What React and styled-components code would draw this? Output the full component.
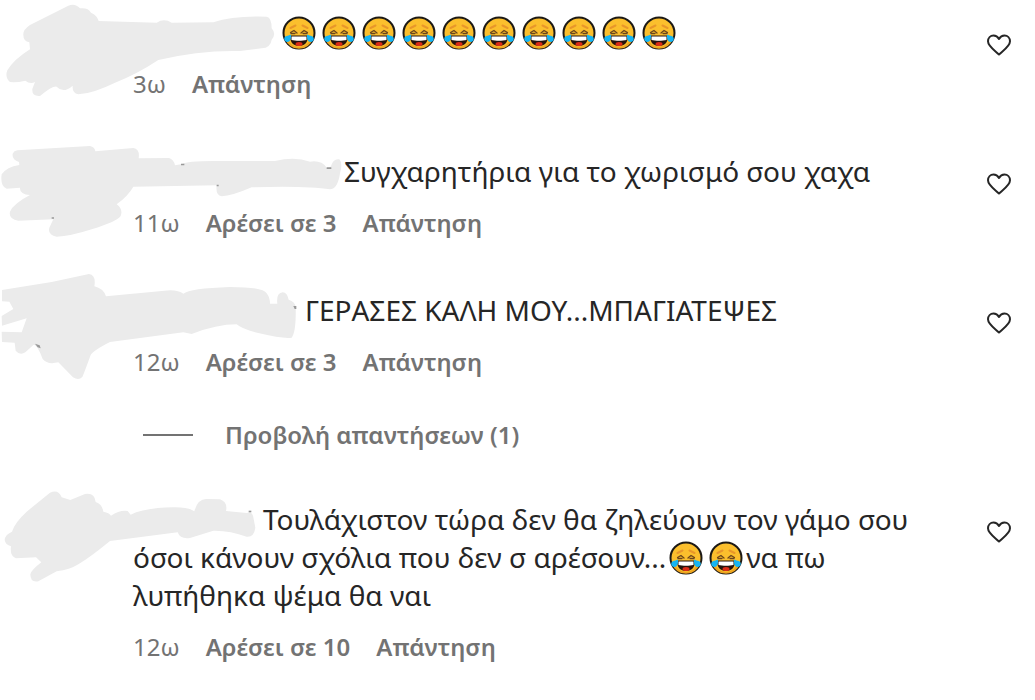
import React from 'react';
import styled, { createGlobalStyle } from 'styled-components';

const GlobalStyle = createGlobalStyle`
  body {
    margin: 0;
    background: #fff;
    font-family: 'Noto Sans', 'Open Sans', sans-serif;
  }
`;

const CommentList = styled.main`
  display: flex;
  flex-direction: column;
  gap: 49px;
  padding: 13px 23px 20px 0;
`;

const StyledComment = styled.article`
  position: relative;
  display: flex;
  align-items: flex-start;
  gap: 36px;
  padding-left: 133px;
`;

const Body = styled.div`
  flex: 1;
  min-width: 0;
`;

const Text = styled.p`
  margin: 0;
  font-size: 28px;
  line-height: 38px;
  color: #262626;
`;

const HiddenName = styled.span`
  display: inline-block;
  width: ${({ $width }) => $width}px;
`;

const Scribble = styled.svg`
  position: absolute;
  top: -29px;
  left: 0;
  width: 350px;
  height: 140px;
  pointer-events: none;
`;

const Meta = styled.div`
  display: flex;
  gap: 26px;
  margin-top: 14px;
  font-size: 24px;
  line-height: 38px;
  color: #737373;
`;

const TextButton = styled.button`
  padding: 0;
  border: none;
  background: none;
  font: inherit;
  font-weight: 600;
  color: #737373;
  cursor: pointer;
`;

const Replies = styled.div`
  display: flex;
  align-items: center;
  gap: 32px;
  margin: 38px 0 0 10px;
  font-size: 24px;
  line-height: 32px;
`;

const Dash = styled.span`
  width: 50px;
  height: 2px;
  background: #737373;
`;

const LikeButton = styled.button`
  display: flex;
  margin-top: 20px;
  padding: 0;
  border: none;
  background: none;
  cursor: pointer;
  svg {
    width: 26px;
    height: 24px;
  }
`;

const StyledJoy = styled.svg`
  width: 34px;
  height: 34px;
  margin: 0 3px;
  vertical-align: -7px;
`;

const Joy = () => (
  <StyledJoy viewBox="0 0 34 34" role="img" aria-label="😂">
    <circle cx="17" cy="17" r="15.500" fill="#fbbf2d" stroke="#1d1a16" strokeWidth="2" />
    <path d="M4 22a13.500 13.500 0 0 0 26 0" fill="none" stroke="#efa51f" strokeWidth="2" />
    <path d="M8.500 12l5-2.500M20.500 9.500l5 2.500" stroke="#e8962a" strokeWidth="2" strokeLinecap="round" />
    <path
      d="M8.500 16.500l3.500-2 3 2.500M9 17.500h4M25.500 16.500l-3.500-2-3 2.500M25 17.500h-4"
      fill="none"
      stroke="#6b451c"
      strokeWidth="1.300"
      strokeLinecap="round"
    />
    <path d="M8 19.500h18c0 7-3.500 10.500-9 10.500S8 26.500 8 19.500z" fill="#25130c" />
    <path d="M9.500 20.500h15V24c-4 1-11 1-15 0z" fill="#fff" />
    <ellipse cx="17" cy="28" rx="3.500" ry="2" fill="#dc2b16" />
    <path d="M9 18.500c.5 4-1 7.500-3.500 7.500-2.200 0-3.700-2-3.200-4 .5-2 3-2 6.700-3.500z" fill="#16b5f3" />
    <path d="M25 18.500c-.5 4 1 7.500 3.500 7.500 2.200 0 3.700-2 3.200-4-.5-2-3-2-6.700-3.500z" fill="#16b5f3" />
  </StyledJoy>
);

const Heart = () => (
  <svg viewBox="0 0 26 24" fill="none" stroke="#262626" strokeWidth="2">
    <path
      d="M13 21.500C9.500 18 2 13.500 2 8.300 2 4.800 4.500 2.500 7.500 2.500c2.400 0 4.200 1.200 5.500 3.500 1.300-2.300 3.100-3.500 5.500-3.500 3 0 5.500 2.300 5.500 5.800 0 5.200-7.500 9.700-11 13.200z"
      strokeLinejoin="round"
    />
  </svg>
);

const comments = [
  {
    id: 1,
    age: '3ω',
    nameWidth: 146,
    text: Array.from({ length: 10 }, (_, i) => <Joy key={i} />),
    scribble: {
      viewBox: '0 -48 1050 420',
      d: 'M70 105Q68 90 90 75L205 17Q225 8 240 25Q264 22 273 38Q292 46 296 63L470 68Q492 54 515 68L640 67Q700 47 800 50Q815 53 815 85Q830 102 815 119Q812 143 785 145L720 153Q600 150 475 180Q410 223 345 248Q280 280 235 283Q216 280 218 257Q190 282 170 260Q158 257 120 288Q95 290 97 267L105 246Q90 253 76 242Q50 248 30 246Q14 232 22 211Q42 178 90 148L88 127Q70 124 70 105Z'
    }
  },
  {
    id: 2,
    age: '11ω',
    likes: 3,
    nameWidth: 211,
    text: 'Συγχαρητήρια για το χωρισμό σου χαχα',
    scribble: {
      viewBox: '0 -36 1050 420',
      d: 'M52 46L270 33Q284 36 286 49L400 39Q420 42 416 70L507 69Q521 73 525 91L547 87Q560 78 640 78L825 78Q885 64 930 80Q965 75 980 98L992 95Q1000 70 1018 73Q1029 84 1020 115Q1013 163 990 163Q920 152 755 157Q695 183 665 184Q646 180 650 151L400 155Q385 182 350 208Q370 223 362 243Q350 260 275 283Q210 304 170 305Q142 300 148 278L160 253L55 257Q25 252 30 230Q40 206 90 180Q58 178 60 158L20 161Q0 155 5 118Q20 96 58 90L57 81Q35 74 38 56Q42 47 52 46Z',
      specks: 'M543 86h10v5h-10zM980 97h14v5h-14zM650 149h6v5h-6zM155 247h7v4h-7z'
    }
  },
  {
    id: 3,
    age: '12ω',
    likes: 3,
    nameWidth: 172,
    text: 'ΓΕΡΑΣΕΣ ΚΑΛΗ ΜΟΥ...ΜΠΑΓΙΑΤΕΨΕΣ',
    replies: 1,
    scribble: {
      viewBox: '0 -9 1050 420',
      d: 'M6 75L155 51L267 27Q289 30 283 64Q310 70 318 94L510 76Q538 77 550 86Q570 70 690 66Q790 66 800 85Q810 98 810 116L832 116Q828 84 848 82Q862 83 866 104Q885 110 887 125Q889 200 875 218Q850 222 775 204Q725 192 710 178Q650 178 575 207L550 202L330 231Q280 256 272 270Q254 320 247 336Q236 348 219 337L175 292Q142 300 128 282Q110 235 100 240L76 262Q60 273 47 257L44 233L6 231L5 200L65 202L80 160L6 182L5 153L40 132L28 110L6 109Z',
      specks: 'M105 236l14 5 3 9-9-3zM880 123h9v9h-5z'
    }
  },
  {
    id: 4,
    age: '12ω',
    likes: 10,
    nameWidth: 130,
    text: (
      <>
        Τουλάχιστον τώρα δεν θα ζηλεύουν τον γάμο σου όσοι κάνουν σχόλια που δεν σ αρέσουν...
        <Joy />
        <Joy />
        να πω λυπήθηκα ψέμα θα ναι
      </>
    ),
    scribble: {
      viewBox: '0 -27 1050 420',
      d: 'M14 180Q15 164 36 155Q44 128 80 95L150 38Q175 26 185 52L211 60L255 42Q284 37 287 66Q307 73 310 95Q328 98 333 107Q360 89 383 93L392 104Q430 84 520 82Q565 81 583 94Q593 56 620 57L660 58Q684 67 678 93L740 99Q757 92 760 112L766 143Q762 172 740 170Q690 151 640 152L570 174Q540 178 533 157L330 183Q270 232 235 253Q210 269 170 274L115 304Q91 309 91 283Q93 271 124 247L108 232L48 235Q29 228 33 199Q16 194 14 180Z',
      specks: 'M746 92h8v5h-8z'
    }
  }
];

const Comment = ({ age, likes, nameWidth, text, replies, scribble }) => (
  <StyledComment>
    <Scribble viewBox={scribble.viewBox} aria-hidden="true">
      <path d={scribble.d} fill="#ebebeb" />
      {scribble.specks && <path d={scribble.specks} fill="#999" />}
    </Scribble>
    <Body>
      <Text>
        <HiddenName $width={nameWidth} />
        {text}
      </Text>
      <Meta>
        <span>{age}</span>
        {likes && <TextButton type="button">Αρέσει σε {likes}</TextButton>}
        <TextButton type="button">Απάντηση</TextButton>
      </Meta>
      {replies && (
        <Replies>
          <Dash />
          <TextButton type="button">Προβολή απαντήσεων ({replies})</TextButton>
        </Replies>
      )}
    </Body>
    <LikeButton type="button" aria-label="Μου αρέσει">
      <Heart />
    </LikeButton>
  </StyledComment>
);

const App = () => (
  <>
    <GlobalStyle />
    <CommentList>
      {comments.map(comment => (
        <Comment key={comment.id} {...comment} />
      ))}
    </CommentList>
  </>
);

export default App;
